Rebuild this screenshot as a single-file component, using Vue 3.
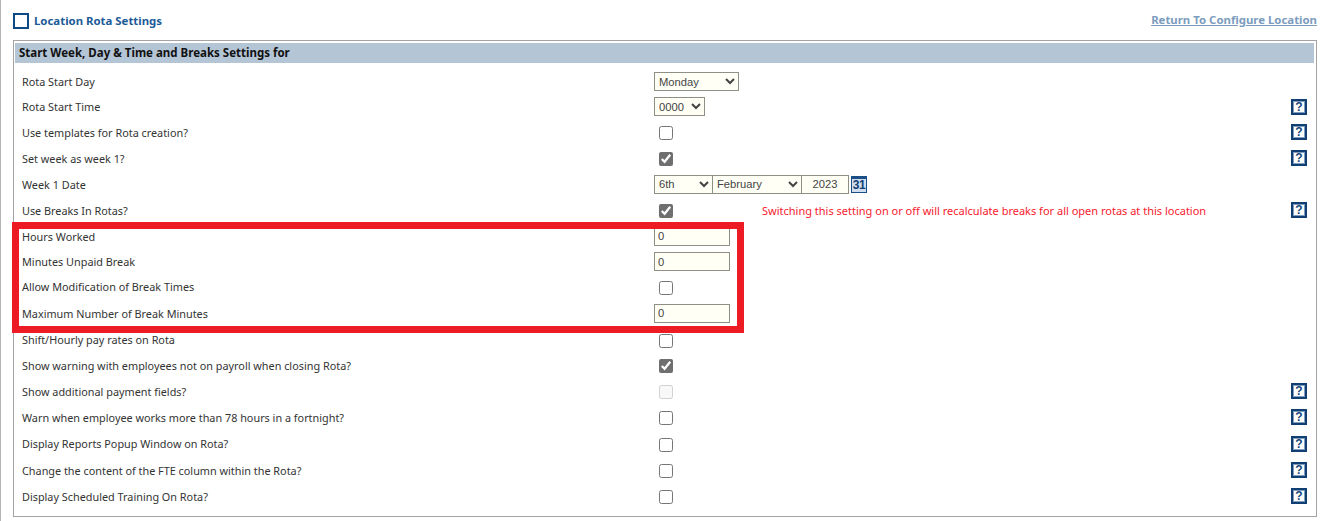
<script setup>
const rows = [
  { label: 'Rota Start Day', h: 25, type: 'day' },
  { label: 'Rota Start Time', h: 25, type: 'time', help: true },
  { label: 'Use templates for Rota creation?', h: 26, type: 'check', help: true },
  { label: 'Set week as week 1?', h: 26, type: 'check', checked: true, help: true },
  { label: 'Week 1 Date', h: 26, type: 'date' },
  { label: 'Use Breaks In Rotas?', h: 26, type: 'check', checked: true, help: true, note: 'Switching this setting on or off will recalculate breaks for all open rotas at this location' },
  { label: 'Hours Worked', h: 26, type: 'text' },
  { label: 'Minutes Unpaid Break', h: 25, type: 'text' },
  { label: 'Allow Modification of Break Times', h: 25, type: 'check' },
  { label: 'Maximum Number of Break Minutes', h: 28, type: 'text' },
  { label: 'Shift/Hourly pay rates on Rota', h: 25, type: 'check' },
  { label: 'Show warning with employees not on payroll when closing Rota?', h: 26, type: 'check', checked: true },
  { label: 'Show additional payment fields?', h: 26, type: 'check', disabled: true, help: true },
  { label: 'Warn when employee works more than 78 hours in a fortnight?', h: 26, type: 'check', help: true },
  { label: 'Display Reports Popup Window on Rota?', h: 27, type: 'check', help: true },
  { label: 'Change the content of the FTE column within the Rota?', h: 26, type: 'check', help: true },
  { label: 'Display Scheduled Training On Rota?', h: 26, type: 'check', help: true },
]
</script>

<template>
  <div class="page">
    <header class="top">
      <div class="title"><span class="title-box"></span><span>Location Rota Settings</span></div>
      <a class="back" href="#">Return To Configure Location</a>
    </header>
    <section class="panel">
      <h2 class="panel-head">Start Week, Day &amp; Time and Breaks Settings for</h2>
      <div class="rows">
        <div v-for="r in rows" :key="r.label" class="row" :style="{ height: r.h + 'px' }">
          <div class="label">{{ r.label }}</div>
          <div class="control">
            <select v-if="r.type === 'day'" class="sel sel-day"><option>Monday</option></select>
            <select v-else-if="r.type === 'time'" class="sel sel-time"><option>0000</option></select>
            <template v-else-if="r.type === 'date'">
              <select class="sel sel-dd"><option>6th</option></select>
              <select class="sel sel-mm"><option>February</option></select>
              <input class="yy" value="2023" />
              <span class="cal">31</span>
            </template>
            <input v-else-if="r.type === 'text'" class="txt" value="0" />
            <input v-else class="chk" type="checkbox" :checked="r.checked" :disabled="r.disabled" />
          </div>
          <div v-if="r.note" class="note">{{ r.note }}</div>
          <span v-if="r.help" class="help">?</span>
        </div>
      </div>
    </section>
    <div class="highlight"></div>
  </div>
</template>

<style>
html, body { margin: 0; background: #fff; }
</style>

<style scoped>
.page {
  position: relative;
  width: 1325px;
  height: 521px;
  box-sizing: border-box;
  padding: 13px 8px 0 12px;
  border-left: 1px solid #b5b5b5;
  font-family: "Noto Sans", sans-serif;
  overflow: hidden;
  background: #fff;
}
.top {
  display: flex;
  justify-content: space-between;
  align-items: center;
  height: 16px;
  margin-bottom: 11px;
}
.title {
  display: flex;
  align-items: center;
  gap: 5px;
  font-size: 11.4px;
  font-weight: 700;
  color: #1c5b98;
}
.title-box {
  width: 16px;
  height: 16px;
  box-sizing: border-box;
  border: 2px solid #0f4a87;
}
.title span:last-child { margin-top: -2px; }
.back {
  font-size: 11.4px;
  font-weight: 700;
  color: #7c9cbd;
  text-decoration: underline;
  margin-top: -4px;
}
.panel {
  height: 477px;
  box-sizing: border-box;
  border: 1px solid #a3a3a3;
  padding: 2px 2px 0 1px;
}
.panel-head {
  margin: 0;
  height: 20px;
  line-height: 20px;
  padding-left: 4px;
  background: #b4c5d6;
  font-size: 11.5px;
  font-weight: 700;
  color: #111;
}
.rows { padding-top: 6px; }
.row {
  display: flex;
  align-items: center;
  padding-left: 7px;
  font-size: 11px;
  color: #333;
  position: relative;
}
.label {
  width: 632px;
  flex: none;
  font-size: 10.85px;
}
.control {
  width: 108px;
  flex: none;
  display: flex;
  align-items: center;
}
.control > * { flex: none; }
.sel, .yy, .txt {
  box-sizing: border-box;
  height: 19px;
  border: 1px solid #8f8f86;
  background: #fffff6;
  font-family: "Liberation Sans", sans-serif;
  font-size: 11.2px;
  color: #444;
  border-radius: 0;
  margin: 0;
  outline: none;
}
.sel-day { width: 85px; }
.sel-time { width: 51px; }
.sel-dd { width: 59px; }
.sel-mm { width: 90px; margin-left: -1px; }
.yy {
  width: 48px;
  margin-left: -1px;
  text-align: center;
  padding: 0;
}
.txt {
  width: 76px;
  padding: 0 3px;
}
.cal {
  width: 16px;
  height: 17px;
  margin-left: 2px;
  box-sizing: border-box;
  border: 1px solid #1c4f86;
  border-top-width: 3px;
  background: #cfdeee;
  color: #123f73;
  font-family: "Liberation Sans", sans-serif;
  font-size: 12px;
  font-weight: 700;
  line-height: 13px;
  text-align: center;
  letter-spacing: -0.5px;
}
.chk {
  width: 14px;
  height: 14px;
  margin: 2px 0 0 5px;
  accent-color: #6f6f6f;
}
.note {
  font-size: 11px;
  color: #f7202e;
}
.help {
  position: absolute;
  right: 7px;
  top: 50%;
  transform: translateY(-8px);
  width: 16px;
  height: 16px;
  box-sizing: border-box;
  border: 2px solid #123f73;
  box-shadow: inset 0 0 0 1px #7f9dbd;
  background: #fff;
  color: #17467a;
  font-family: "Liberation Sans", sans-serif;
  font-size: 12px;
  font-weight: 700;
  line-height: 12px;
  text-align: center;
}
.highlight {
  position: absolute;
  left: 11px;
  top: 222px;
  width: 732px;
  height: 111px;
  box-sizing: border-box;
  border: 7px solid #ed1c24;
  pointer-events: none;
}
</style>
